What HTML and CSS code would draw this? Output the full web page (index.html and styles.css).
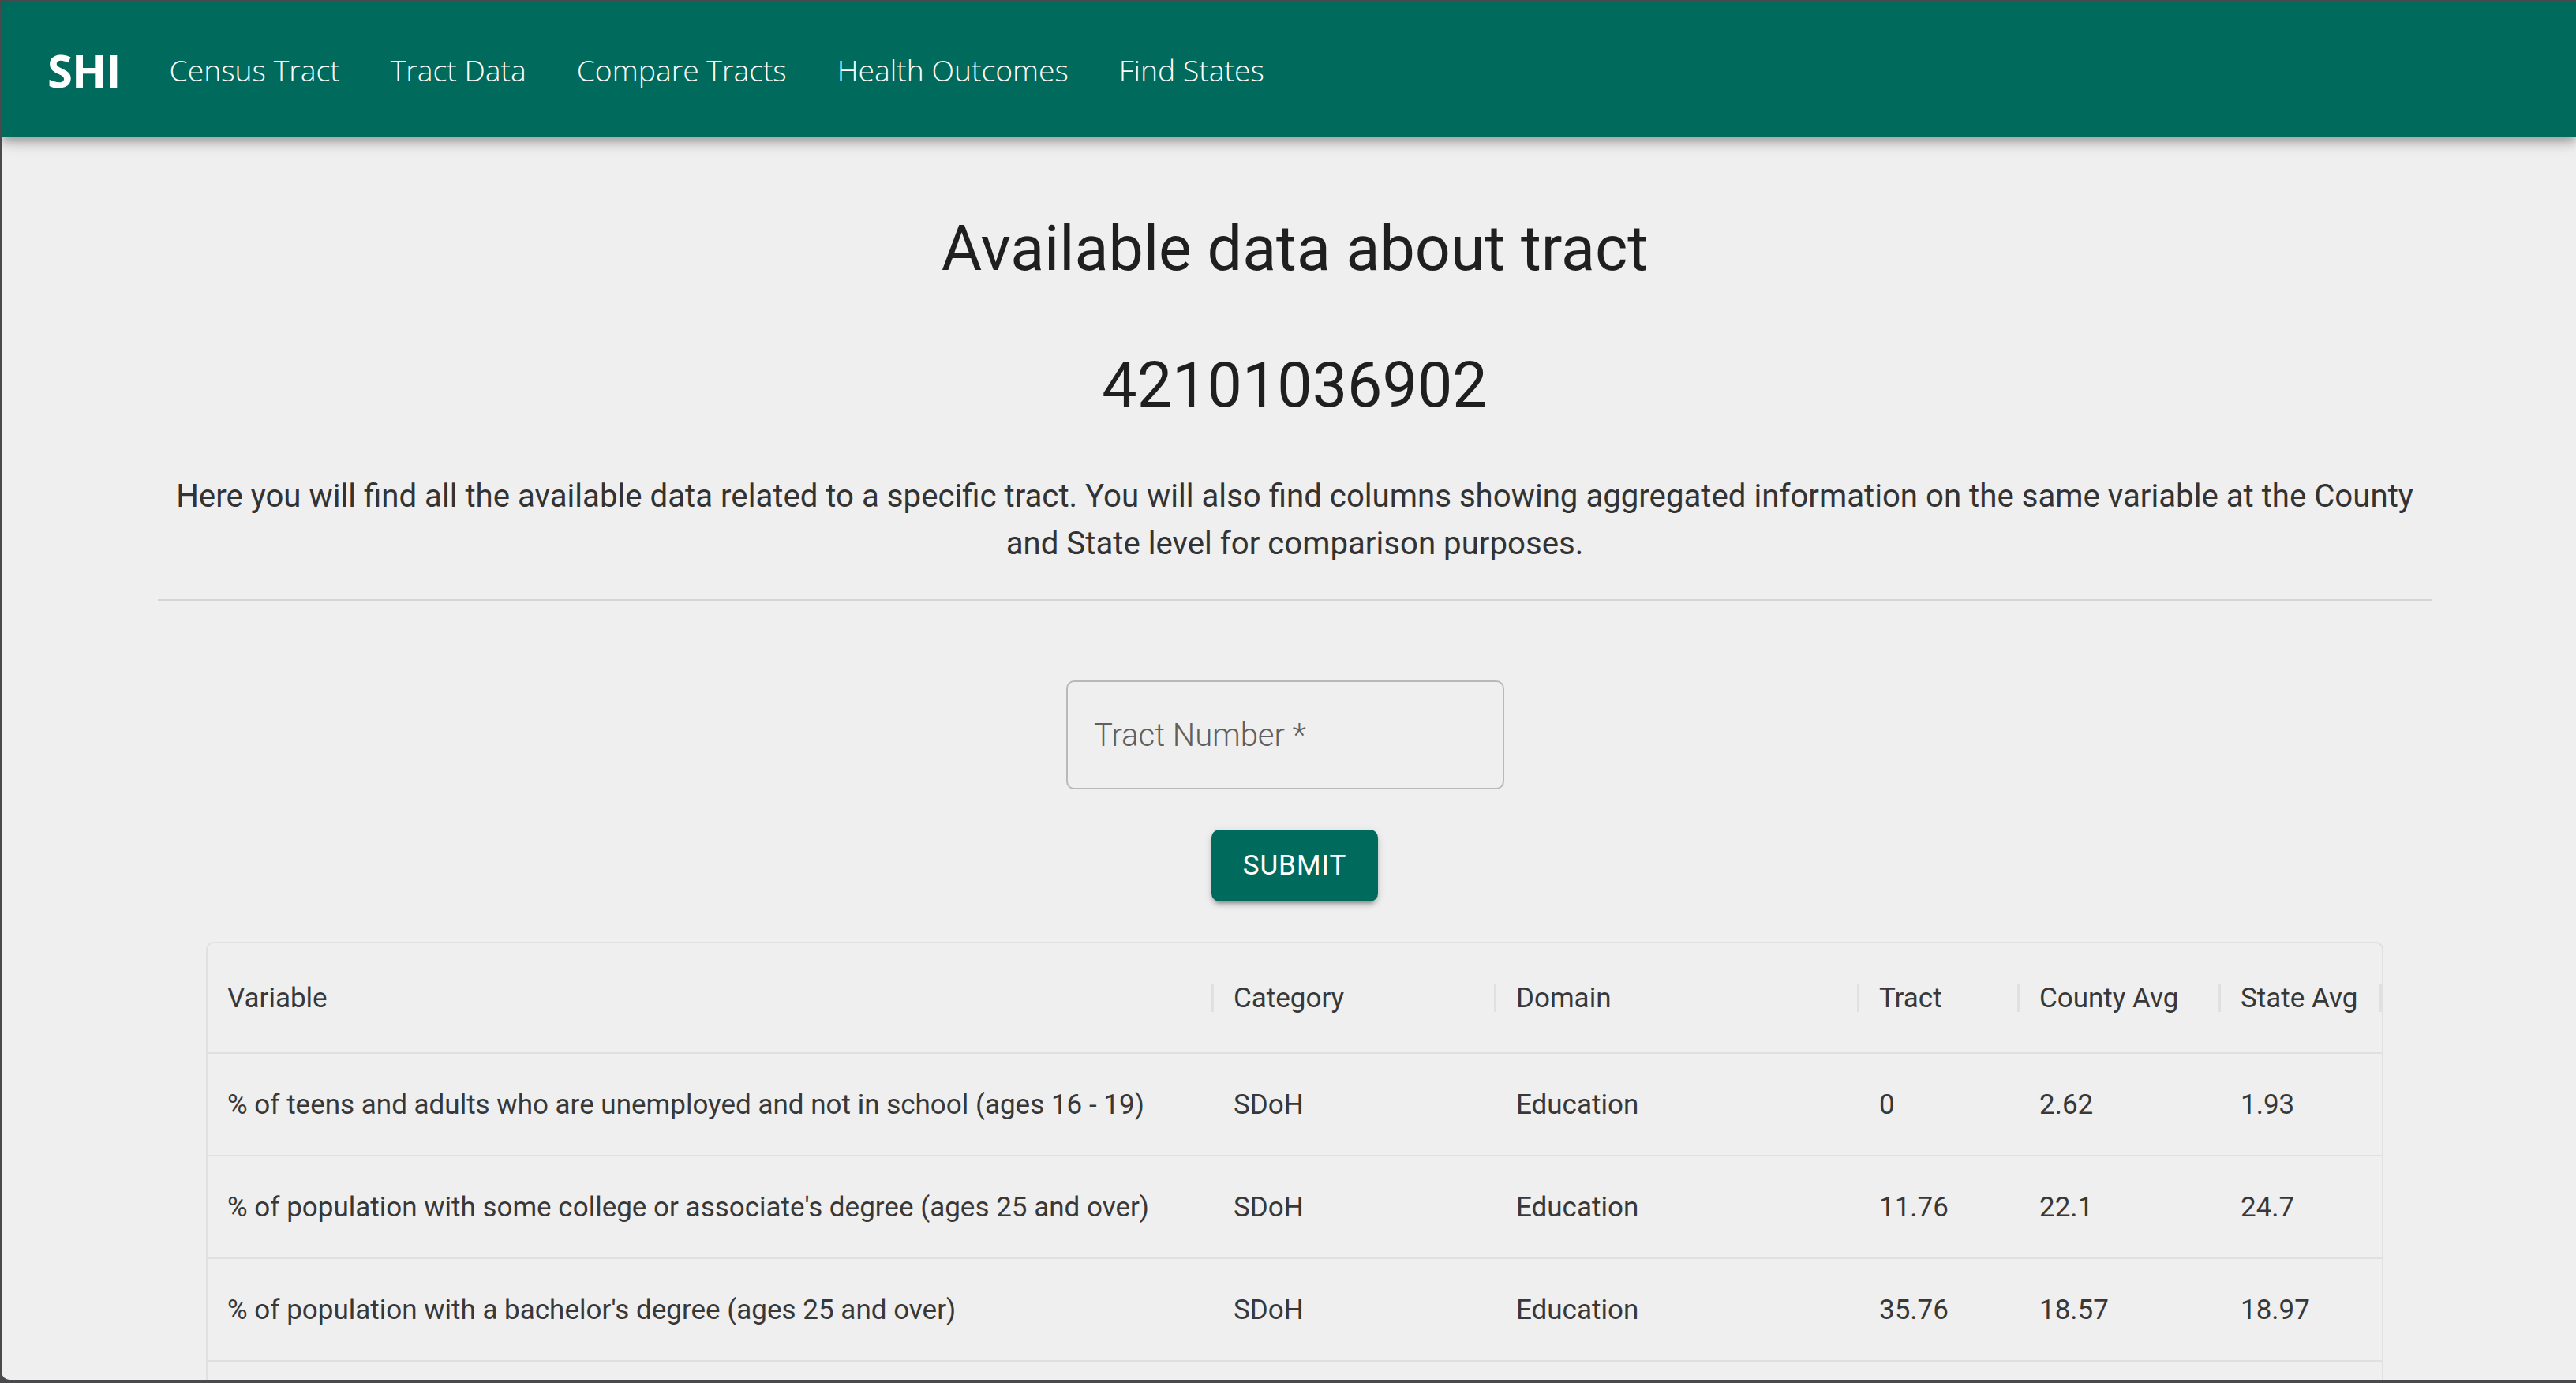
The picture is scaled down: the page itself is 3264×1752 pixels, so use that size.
FILE: index.html
```html
<!DOCTYPE html>
<html lang="en">
<head>
<meta charset="utf-8">
<title>SHI - Tract Data</title>
<link rel="stylesheet" href="styles.css">
</head>
<body>
<div class="window">
  <header class="appbar">
    <div class="brand">SHI</div>
    <nav class="nav">
      <a class="nav-link">Census Tract</a>
      <a class="nav-link">Tract Data</a>
      <a class="nav-link">Compare Tracts</a>
      <a class="nav-link">Health Outcomes</a>
      <a class="nav-link">Find States</a>
    </nav>
  </header>
  <main class="content">
    <h1 class="title">Available data about tract</h1>
    <h2 class="tract-id">42101036902</h2>
    <p class="intro">Here you will find all the available data related to a specific tract. You will also find columns showing aggregated information on the same variable at the County and State level for comparison purposes.</p>
    <hr class="divider">
    <form class="search">
      <div class="field"><span class="placeholder">Tract Number *</span></div>
      <button type="button" class="submit">SUBMIT</button>
    </form>
    <div class="grid">
      <div class="row head">
        <div class="cell">Variable</div>
        <div class="cell">Category</div>
        <div class="cell">Domain</div>
        <div class="cell">Tract</div>
        <div class="cell">County Avg</div>
        <div class="cell">State Avg</div>
      </div>
      <div class="row">
        <div class="cell">% of teens and adults who are unemployed and not in school (ages 16 - 19)</div>
        <div class="cell">SDoH</div>
        <div class="cell">Education</div>
        <div class="cell">0</div>
        <div class="cell">2.62</div>
        <div class="cell">1.93</div>
      </div>
      <div class="row">
        <div class="cell">% of population with some college or associate's degree (ages 25 and over)</div>
        <div class="cell">SDoH</div>
        <div class="cell">Education</div>
        <div class="cell">11.76</div>
        <div class="cell">22.1</div>
        <div class="cell">24.7</div>
      </div>
      <div class="row">
        <div class="cell">% of population with a bachelor's degree (ages 25 and over)</div>
        <div class="cell">SDoH</div>
        <div class="cell">Education</div>
        <div class="cell">35.76</div>
        <div class="cell">18.57</div>
        <div class="cell">18.97</div>
      </div>
      <div class="row">
        <div class="cell"></div>
        <div class="cell"></div>
        <div class="cell"></div>
        <div class="cell"></div>
        <div class="cell"></div>
        <div class="cell"></div>
      </div>
    </div>
  </main>
</div>
</body>
</html>
```
FILE: styles.css
```css
html, body {
  margin: 0;
  padding: 0;
  height: 100%;
  background: #4a4a4c;
  overflow: hidden;
}

.window {
  margin: 3px 0 0 2px;
  height: 1745px;
  background: #efefef;
  border-bottom-left-radius: 10px;
  overflow: hidden;
  font-family: Roboto, "Liberation Sans", sans-serif;
  color: #222;
}

.appbar {
  height: 170px;
  background: #006b5c;
  display: flex;
  align-items: center;
  padding-left: 58px;
  box-shadow: 0 5px 10px -2px rgba(0,0,0,0.2), 0 10px 12px 0 rgba(0,0,0,0.14), 0 3px 25px 0 rgba(0,0,0,0.12);
  position: relative;
  z-index: 1;
}

.brand {
  font-family: "Open Sans", sans-serif;
  font-weight: 700;
  font-size: 58px;
  color: #fff;
  letter-spacing: -1px;
  margin-right: 62px;
}

.nav {
  display: flex;
  gap: 64px;
}

.nav-link {
  font-family: "Open Sans", sans-serif;
  font-weight: 300;
  font-size: 37.3px;
  color: #fff;
}

.content {
  padding: 0 183px 0 198px;
  display: flex;
  flex-direction: column;
  align-items: center;
}

.title, .tract-id {
  margin: 0;
  font-weight: 400;
  font-size: 79px;
  line-height: 100px;
  color: #1f1f1f;
  text-align: center;
}

.title { margin-top: 92px; }
.tract-id { margin-top: 73px; }

.intro {
  margin: 61px 0 0;
  font-size: 40.2px;
  line-height: 60px;
  font-weight: 400;
  color: #333;
  text-align: center;
}

.divider {
  align-self: stretch;
  margin: 40px 0 0;
  border: none;
  height: 2px;
  background: #d4d4d4;
}

.search {
  margin-top: 101px;
  display: flex;
  flex-direction: column;
  align-items: center;
}

.field {
  box-sizing: border-box;
  width: 555px;
  height: 138px;
  border: 2px solid #b9b9b9;
  border-radius: 10px;
  display: flex;
  align-items: center;
  padding-left: 33px;
  margin-right: 24px;
}

.placeholder {
  font-size: 40px;
  font-weight: 300;
  color: #606060;
}

.submit {
  margin-top: 51px;
  width: 211px;
  height: 91px;
  border: none;
  border-radius: 10px;
  background: #006b5c;
  color: #fff;
  font-family: Roboto, sans-serif;
  font-size: 35px;
  font-weight: 400;
  letter-spacing: 1px;
  box-shadow: 0 7px 3px -5px rgba(0,0,0,0.2), 0 5px 5px 0 rgba(0,0,0,0.14), 0 3px 12px 0 rgba(0,0,0,0.12);
}

.grid {
  margin-top: 51px;
  align-self: flex-start;
  margin-left: 61px;
  border: 2px solid #e0e0e0;
  border-radius: 10px;
  font-size: 35px;
  font-weight: 400;
  color: #383838;
}

.row {
  display: grid;
  grid-template-columns: 1275px 358px 460px 203px 255px 204px;
  height: 128px;
  border-top: 2px solid #e0e0e0;
}

.row.head {
  height: 138px;
  border-top: none;
}

.cell {
  display: flex;
  align-items: center;
  padding-left: 25px;
  white-space: nowrap;
  overflow: hidden;
}

.head .cell::after {
  content: "";
  margin-left: auto;
  width: 3px;
  height: 35px;
  background: #e0e0e0;
  flex: none;
}
```
